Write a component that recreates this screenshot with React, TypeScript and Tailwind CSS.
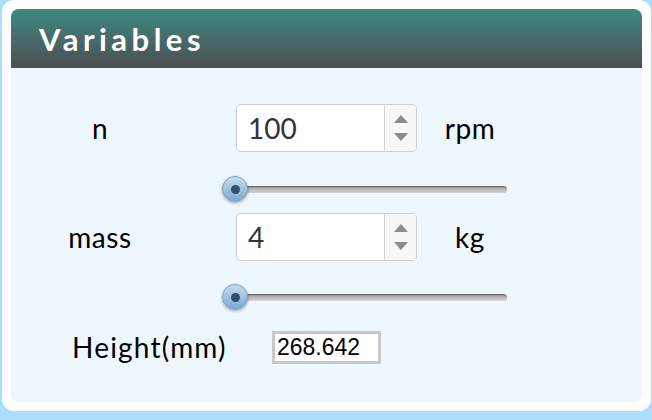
const Spinner = () => (
  <div className="w-[32px] h-full border-l border-[#d4d4d4] bg-[#f7f7f7] rounded-r-[4px] flex flex-col items-center justify-center gap-[10px]">
    <svg width="14" height="8" viewBox="0 0 14 8">
      <path d="M7 0 L14 8 L0 8 Z" fill="#8c8c8c" />
    </svg>
    <svg width="14" height="8" viewBox="0 0 14 8">
      <path d="M0 0 L14 0 L7 8 Z" fill="#8c8c8c" />
    </svg>
  </div>
);

const NumberBox = ({ value }: { value: string }) => (
  <div className="w-[181px] h-[48px] bg-white border border-[#cfcfcf] rounded-[5px] flex items-stretch">
    <div className="flex-1 flex items-center pl-[11px] text-[28px] text-[#333] leading-none">
      {value}
    </div>
    <Spinner />
  </div>
);

const Slider = () => (
  <div className="relative w-[285px] h-[26px] ml-[211px] flex items-center">
    <div className="ml-[4px] w-[281px] h-[7px] rounded-full bg-gradient-to-b from-[#8e8e8e] via-[#b9b9b9] to-[#d6d6d6] shadow-[inset_0_1px_1px_rgba(0,0,0,0.3)]" />
    <div className="absolute left-0 top-0 w-[26px] h-[26px] rounded-full bg-gradient-to-b from-[#c6ddf0] to-[#7ea7cb] border border-[#7d9fbf] shadow-[0_1px_3px_rgba(0,0,0,0.35)] flex items-center justify-center">
      <div className="w-[9px] h-[9px] rounded-full bg-[#2e4f6e]" />
    </div>
  </div>
);

const Row = ({ label, value, unit }: { label: string; value: string; unit: string }) => (
  <div className="flex items-center">
    <div className="w-[178px] text-center text-[28px] tracking-[0.6px] text-black">{label}</div>
    <div className="ml-[47px]">
      <NumberBox value={value} />
    </div>
    <div className="w-[106px] text-center text-[28px] tracking-[0.6px] text-black">{unit}</div>
  </div>
);

const App = () => {
  return (
    <div className="w-[652px] h-[420px] bg-[#aadefa] font-['Lato',sans-serif]">
      <div className="ml-[2px] w-[649px] h-[411px] bg-white rounded-[12px] p-[9px] flex flex-col">
        <div className="h-[59px] rounded-t-[8px] bg-gradient-to-b from-[#3a8a84] to-[#4a4e51] flex items-center pl-[28px]">
          <h2 className="text-white text-[31px] font-bold tracking-[4.5px] leading-none pt-[2px]">
            Variables
          </h2>
        </div>
        <div className="flex-1 bg-[#edf7fd] rounded-b-[8px] pt-[36px]">
          <Row label="n" value="100" unit="rpm" />
          <div className="mt-[24px]">
            <Slider />
          </div>
          <div className="mt-[11px]">
            <Row label="mass" value="4" unit="kg" />
          </div>
          <div className="mt-[23px]">
            <Slider />
          </div>
          <div className="flex items-center mt-[16px]">
            <div className="ml-[61px] w-[200px] text-[28px] tracking-[1.2px] text-black">Height(mm)</div>
            <div className="w-[109px] h-[33px] border-[3px] border-[#c9c9c9] bg-white flex items-center pl-[2px] font-['Liberation_Sans',sans-serif] text-[23px] text-black leading-none">
              268.642
            </div>
          </div>
        </div>
      </div>
    </div>
  );
};

export default App;
